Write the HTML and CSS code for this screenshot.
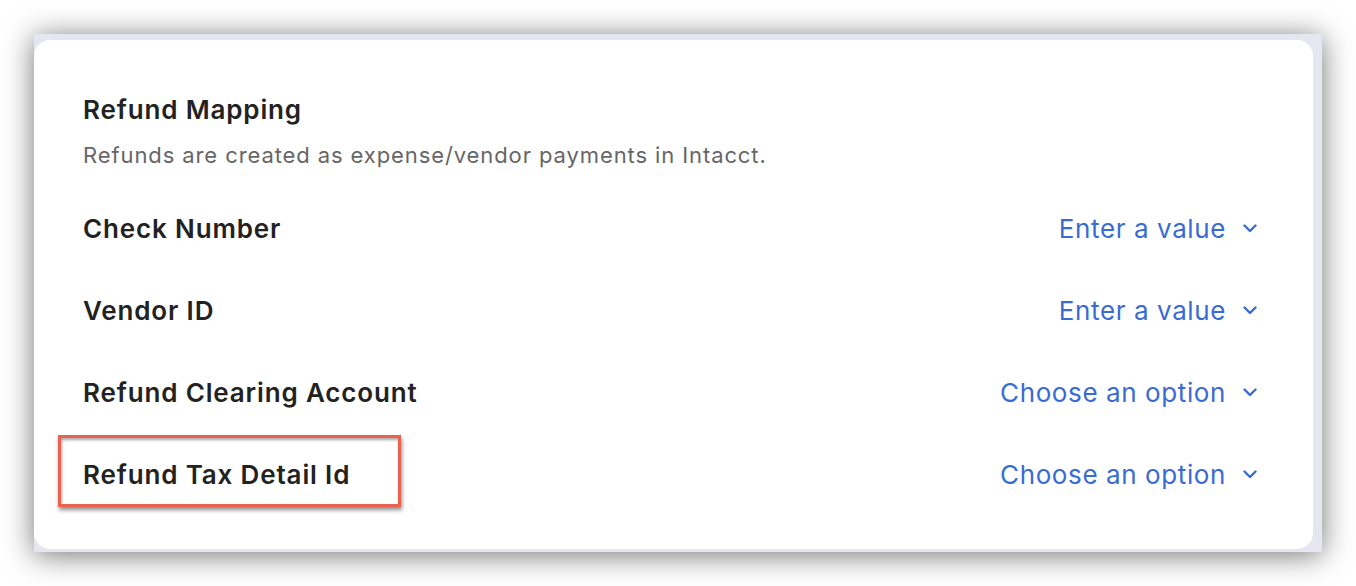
FILE: index.html
```html
<!DOCTYPE html>
<html>
<head>
<meta charset="utf-8">
<link rel="stylesheet" href="styles.css">
</head>
<body>
<div class="window">
  <div class="card">
    <h1 class="title">Refund Mapping</h1>
    <p class="subtitle">Refunds are created as expense/vendor payments in Intacct.</p>
    <div class="rows">
      <div class="row">
        <span class="label">Check Number</span>
        <span class="select">Enter a value<svg class="chev" viewBox="0 0 14 9" width="14" height="9"><path d="M1.5 1.5 L7 7 L12.5 1.5" /></svg></span>
      </div>
      <div class="row">
        <span class="label">Vendor ID</span>
        <span class="select">Enter a value<svg class="chev" viewBox="0 0 14 9" width="14" height="9"><path d="M1.5 1.5 L7 7 L12.5 1.5" /></svg></span>
      </div>
      <div class="row">
        <span class="label">Refund Clearing Account</span>
        <span class="select">Choose an option<svg class="chev" viewBox="0 0 14 9" width="14" height="9"><path d="M1.5 1.5 L7 7 L12.5 1.5" /></svg></span>
      </div>
      <div class="row highlighted">
        <span class="label">Refund Tax Detail Id</span>
        <span class="select">Choose an option<svg class="chev" viewBox="0 0 14 9" width="14" height="9"><path d="M1.5 1.5 L7 7 L12.5 1.5" /></svg></span>
        <span class="annot"></span>
      </div>
    </div>
  </div>
</div>
</body>
</html>
```
FILE: styles.css
```css
html, body {
  margin: 0;
  padding: 0;
  background: #ffffff;
}
body {
  font-family: Inter, "Noto Sans", "Liberation Sans", sans-serif;
  padding: 34px;
  width: 1288px;
  height: 518px;
}
.window {
  width: 1288px;
  height: 518px;
  box-sizing: border-box;
  background: #e6e6f0;
  padding: 6px 9px 3px 0;
  box-shadow: 0 3px 28px rgba(0, 0, 0, 0.55);
}
.card {
  background: #ffffff;
  height: 100%;
  border-radius: 16px;
  box-sizing: border-box;
  padding: 54px 56px 0 49px;
}
.title {
  margin: 0;
  font-size: 26px;
  letter-spacing: 0.85px;
  line-height: 32px;
  font-weight: 600;
  color: #222222;
}
.subtitle {
  margin: 15px 0 0 0;
  font-size: 22px;
  letter-spacing: 0.9px;
  line-height: 28px;
  color: #666666;
}
.rows {
  margin-top: 18px;
  display: flex;
  flex-direction: column;
}
.row {
  height: 82px;
  display: flex;
  align-items: center;
  justify-content: space-between;
  position: relative;
}
.label {
  font-size: 26px;
  letter-spacing: 0.85px;
  font-weight: 600;
  color: #222222;
}
.select {
  font-size: 26px;
  letter-spacing: 0.6px;
  color: #3a6bd3;
  display: flex;
  align-items: center;
}
.chev {
  margin-left: 17px;
  fill: none;
  stroke: #3a6bd3;
  stroke-width: 2.4;
  stroke-linecap: round;
  stroke-linejoin: round;
}
.annot {
  position: absolute;
  left: -25px;
  top: 2px;
  width: 343px;
  height: 72px;
  box-sizing: border-box;
  border: 3px solid #e9614f;
  box-shadow: 1px 3px 4px rgba(0, 0, 0, 0.45), inset 1px 2px 3px rgba(0, 0, 0, 0.35);
}
```
